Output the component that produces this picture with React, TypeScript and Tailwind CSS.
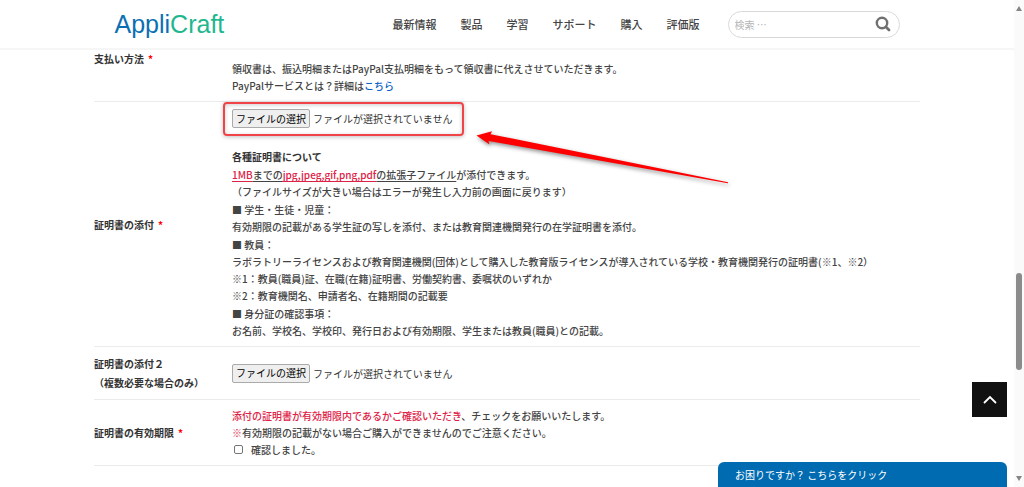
import { useRef, useState } from "react";
import type { ReactNode } from "react";

const navItems = ["最新情報", "製品", "学習", "サポート", "購入", "評価版"];

function Header() {
  return (
    <header className="border-b-2 border-[#f6f6f6] bg-white">
      <div className="mx-auto flex h-12 max-w-[785px] items-center">
        <a href="#" className="font-['Liberation_Sans',sans-serif] text-[25px] leading-none text-[#0b6fb3]">
          Appli<span className="text-[#1fb78f]">Craft</span>
        </a>
        <nav className="ml-auto flex gap-6 text-[11px] font-medium text-[#444]">
          {navItems.map((item) => (
            <a key={item} href="#">
              {item}
            </a>
          ))}
        </nav>
        <form
          className="ml-7 flex h-[27px] w-[172px] items-center rounded-full border border-[#d9d9d9] pr-2 pl-1.5"
          onSubmit={(e) => e.preventDefault()}
        >
          <input
            type="search"
            aria-label="検索"
            placeholder="検索 …"
            className="min-w-0 flex-1 text-[10px] font-normal outline-none placeholder:text-[#b5b5b5]"
          />
          <button type="submit" aria-label="検索" className="text-[#707070]">
            <svg width="16" height="16" viewBox="0 0 16 16" fill="none" stroke="currentColor" className="block">
              <circle cx="7" cy="7" r="5.2" strokeWidth="2.4" />
              <path d="M11 11 L14 14" strokeWidth="2.8" strokeLinecap="round" />
            </svg>
          </button>
        </form>
      </div>
    </header>
  );
}

function Row({ label, children }: { label: ReactNode; children: ReactNode }) {
  return (
    <div className="grid grid-cols-[138px_1fr] items-center border-b border-[#ebebeb] py-[7px]">
      <div className="font-bold text-[#333]">{label}</div>
      <div>{children}</div>
    </div>
  );
}

function Required() {
  return <span className="ml-1 text-[#f00]">*</span>;
}

function FileField({ label }: { label: string }) {
  const inputRef = useRef<HTMLInputElement>(null);
  const [fileName, setFileName] = useState("");

  return (
    <div className="flex items-center gap-[3px] font-normal text-[#333]">
      <input
        ref={inputRef}
        type="file"
        aria-label={label}
        accept=".jpg,.jpeg,.gif,.png,.pdf"
        className="hidden"
        onChange={(e) => setFileName(e.target.files?.[0]?.name ?? "")}
      />
      <button
        type="button"
        onClick={() => inputRef.current?.click()}
        className="h-[19px] rounded-xs border border-[#aaa] bg-[#efefef] px-[3px] leading-4 text-black"
      >
        ファイルの選択
      </button>
      <span>{fileName || "ファイルが選択されていません"}</span>
    </div>
  );
}

function Arrow() {
  return (
    <svg
      className="pointer-events-none absolute top-[22px] left-[244px] drop-shadow-[1px_2px_2px_rgba(0,0,0,0.45)]"
      width="254"
      height="56"
      viewBox="0 0 254 56"
      fill="#f00"
    >
      <path d="M0.5 4.5 L16 0.3 L14.5 3.2 L252 51.2 L252 52.2 L12.5 10 L13.5 13.5 Z" />
    </svg>
  );
}

export default function App() {
  return (
    <div
      lang="ja"
      className="min-h-screen bg-white pr-[10px] font-['Noto_Sans_CJK_JP',sans-serif] text-[10px] leading-[17px] font-medium text-[#444]"
    >
      <Header />

      <main className="mx-auto max-w-[826px]">
        <div className="grid grid-cols-[138px_1fr] items-start border-b border-[#ebebeb] pb-[7px]">
          <div className="font-bold text-[#333]">
            支払い方法
            <Required />
          </div>
          <div className="pt-[10px]">
            <p>領収書は、振込明細またはPayPal支払明細をもって領収書に代えさせていただきます。</p>
            <p>
              PayPalサービスとは？詳細は
              <a href="#" className="text-[#0a62c4]">
                こちら
              </a>
            </p>
          </div>
        </div>

        <Row
          label={
            <>
              証明書の添付
              <Required />
            </>
          }
        >
          <div className="relative w-fit">
            <FileField label="証明書の添付" />
            <div className="pointer-events-none absolute -top-[7px] -right-3 -bottom-2 -left-[9px] rounded border-2 border-[#f04448] shadow-[0_1px_4px_rgba(0,0,0,0.25),inset_0_1px_4px_rgba(0,0,0,0.2)]" />
            <Arrow />
          </div>

          <div className="mt-5 space-y-px">
            <p className="font-bold text-[#333]">各種証明書について</p>
            <p>
              <span className="text-[#e02146] underline underline-offset-2">1MB</span>
              <span className="underline underline-offset-2">までの</span>
              <span className="text-[#e02146] underline underline-offset-2">jpg,jpeg,gif,png,pdf</span>
              <span className="underline underline-offset-2">の拡張子ファイル</span>
              が添付できます。
              <br />
              （ファイルサイズが大きい場合はエラーが発生し入力前の画面に戻ります）
            </p>
            <p>
              ■ 学生・生徒・児童：
              <br />
              有効期限の記載がある学生証の写しを添付、または教育関連機関発行の在学証明書を添付。
            </p>
            <p>
              ■ 教員：
              <br />
              ラボラトリーライセンスおよび教育関連機関(団体)として購入した教育版ライセンスが導入されている学校・教育機関発行の証明書(※1、※2）
              <br />
              ※1：教員(職員)証、在職(在籍)証明書、労働契約書、委嘱状のいずれか
              <br />
              ※2：教育機関名、申請者名、在籍期間の記載要
            </p>
            <p>
              ■ 身分証の確認事項：
              <br />
              お名前、学校名、学校印、発行日および有効期限、学生または教員(職員)との記載。
            </p>
          </div>
        </Row>

        <Row
          label={
            <div className="leading-[19px]">
              証明書の添付２
              <br />
              （複数必要な場合のみ）
            </div>
          }
        >
          <FileField label="証明書の添付２" />
        </Row>

        <Row
          label={
            <>
              証明書の有効期限
              <Required />
            </>
          }
        >
          <p>
            <span className="text-[#e02146]">添付の証明書が有効期限内であるかご確認いただき</span>
            、チェックをお願いいたします。
          </p>
          <p>
            <span className="text-[#e02146]">※</span>
            有効期限の記載がない場合ご購入ができませんのでご注意ください。
          </p>
          <label className="flex items-center gap-2">
            <input
              type="checkbox"
              className="ml-0.5 size-[9px] appearance-none rounded-xs border border-[#767676] bg-white checked:bg-[#0075ff]"
            />
            確認しました。
          </label>
        </Row>
      </main>

      <button
        type="button"
        aria-label="ページの先頭へ"
        onClick={() => window.scrollTo({ top: 0 })}
        className="fixed right-[17px] bottom-[70px] flex size-[35px] items-center justify-center bg-[#111] text-white"
      >
        <svg width="14" height="10" viewBox="0 0 14 10" fill="none" stroke="currentColor" strokeWidth="1.8" strokeLinecap="round">
          <path d="M1.5 7.5 L7 2 L12.5 7.5" />
        </svg>
      </button>

      <button
        type="button"
        className="fixed right-[17px] bottom-0 h-[25px] w-[289px] rounded-t-md bg-[#006bb0] px-[17px] text-left font-normal text-white"
      >
        お困りですか？ こちらをクリック
      </button>

      {/* scrollbar */}
      <div className="fixed inset-y-0 right-0 flex w-[10px] flex-col items-center justify-between bg-[#fafafa] py-1.5">
        <svg width="6" height="5" viewBox="0 0 6 5" fill="#858585">
          <path d="M3 0 L6 5 H0 Z" />
        </svg>
        <div className="absolute top-[56%] h-[20%] w-1.5 rounded-full bg-[#8b8b8b]" />
        <svg width="6" height="5" viewBox="0 0 6 5" fill="#858585">
          <path d="M3 5 L6 0 H0 Z" />
        </svg>
      </div>
    </div>
  );
}
